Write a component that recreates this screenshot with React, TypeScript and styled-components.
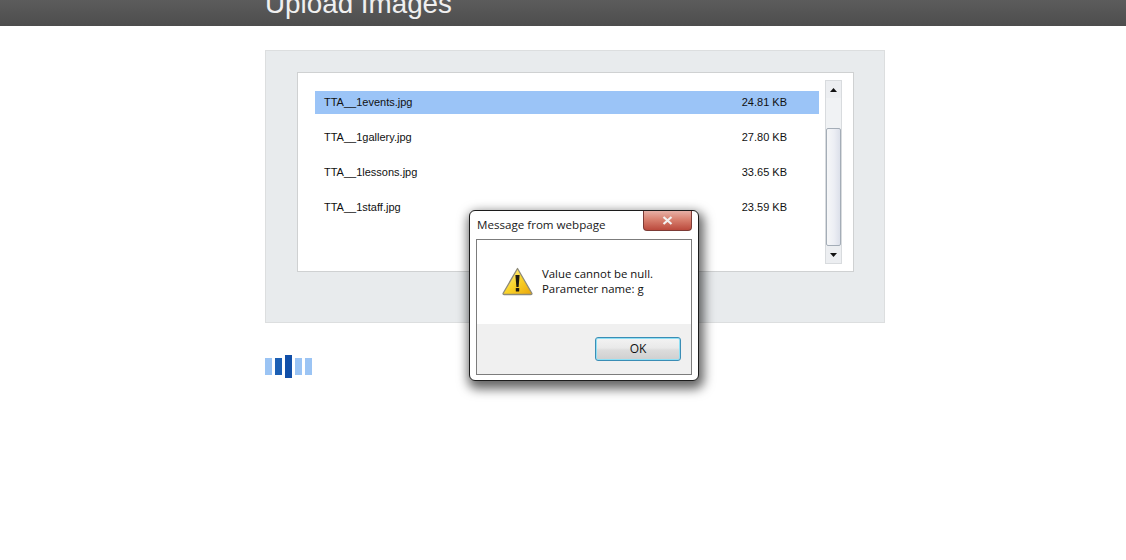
import React from 'react';
import styled, { createGlobalStyle } from 'styled-components';

const GlobalStyle = createGlobalStyle`
  html, body {
    margin: 0;
    padding: 0;
    background: #fff;
    font-family: "Liberation Sans", Arial, sans-serif;
  }
`;

const Page = styled.div`
  position: relative;
  width: 1126px;
  height: 560px;
  overflow: hidden;
`;

const Header = styled.header`
  height: 26px;
  padding-left: 265px;
  background: linear-gradient(#5c5c5c, #4d4d4d);
  overflow: hidden;
`;

const Title = styled.h1`
  margin: -11px 0 0;
  font-size: 27.8px;
  line-height: 30px;
  font-weight: 400;
  color: #f0f0f0;
  white-space: nowrap;
`;

const Content = styled.main`
  width: 620px;
  margin: 24px 0 0 265px;
`;

const Panel = styled.section`
  box-sizing: border-box;
  height: 273px;
  padding: 21px 30px 0 31px;
  background: #e8ebed;
  border: 1px solid #dcdedf;
`;

const ListBox = styled.div`
  box-sizing: border-box;
  height: 200px;
  padding: 7px 11px 0 17px;
  background: #fff;
  border: 1px solid #cfd1d2;
  display: flex;
  justify-content: space-between;
`;

const FileList = styled.ul`
  width: 504px;
  margin: 11px 0 0;
  padding: 0;
  list-style: none;
  display: flex;
  flex-direction: column;
  gap: 12px;
`;

const FileRow = styled.li<{ $selected?: boolean }>`
  height: 23px;
  padding: 0 32px 2px 9px;
  box-sizing: border-box;
  display: flex;
  align-items: center;
  justify-content: space-between;
  font-size: 11px;
  color: #111;
  background: ${p => (p.$selected ? '#9bc4f7' : 'transparent')};
`;

const Scrollbar = styled.div`
  box-sizing: border-box;
  width: 17px;
  height: 184px;
  display: flex;
  flex-direction: column;
  background: #f0f2f4;
  border: 1px solid #d8dbde;
`;

const ScrollArrow = styled.div`
  height: 17px;
  flex: none;
  display: flex;
  align-items: center;
  justify-content: center;
  background: #eceef1;
`;

const ScrollSpace = styled.div`
  height: 30px;
  flex: none;
`;

const ScrollThumb = styled.div`
  flex: 1;
  border: 1px solid #a4adb7;
  border-radius: 2px;
  background: linear-gradient(90deg, #f6f7f8, #eceef4 55%, #dce0ea);
`;

const Spinner = styled.div`
  height: 23px;
  margin-top: 32px;
  display: flex;
  align-items: center;
  gap: 3px;
`;

const SpinnerBar = styled.span<{ $tone: 'light' | 'mid' | 'dark' }>`
  width: 7px;
  height: ${p => (p.$tone === 'dark' ? 23 : 17)}px;
  background: ${p =>
    p.$tone === 'light' ? '#9bc4f4' : p.$tone === 'mid' ? '#1c5fb4' : '#114fa8'};
`;

const Dialog = styled.div`
  position: absolute;
  left: 469px;
  top: 210px;
  box-sizing: border-box;
  width: 230px;
  height: 171px;
  padding: 0 6px 5px;
  display: flex;
  flex-direction: column;
  background: #fff;
  border: 1px solid #1c1c1c;
  border-radius: 6px;
  box-shadow: 2px 5px 11px 3px rgba(0, 0, 0, 0.6);
`;

const DialogTitle = styled.div`
  height: 28px;
  flex: none;
  padding: 0 0 2px 1px;
  box-sizing: border-box;
  display: flex;
  align-items: center;
  font-family: "Open Sans", "Noto Sans", sans-serif;
  font-size: 11.6px;
  color: #1a1a1a;
`;

const CloseButton = styled.div`
  position: absolute;
  top: 0;
  right: 6px;
  width: 47px;
  height: 19px;
  display: flex;
  align-items: center;
  justify-content: center;
  background: linear-gradient(#e6b0a6, #d8806f 45%, #bb4a3d);
  border: 1px solid #7d3b36;
  border-top: none;
  border-radius: 0 0 4px 4px;
`;

const DialogBody = styled.div`
  flex: 1;
  display: flex;
  flex-direction: column;
  border: 1px solid #7c7c7c;
`;

const MessageArea = styled.div`
  height: 84px;
  flex: none;
  padding: 26px 0 0 25px;
  box-sizing: border-box;
  display: flex;
  gap: 9px;
  background: #fff;
`;

const MessageText = styled.div`
  font-family: "Open Sans", "Noto Sans", sans-serif;
  font-size: 11.4px;
  line-height: 15px;
  color: #111;
`;

const ButtonArea = styled.div`
  flex: 1;
  padding: 13px 10px 0 0;
  display: flex;
  justify-content: flex-end;
  align-items: flex-start;
  background: #f0f0f0;
`;

const OkButton = styled.button`
  box-sizing: border-box;
  width: 86px;
  height: 24px;
  padding: 0 0 2px;
  font-family: "Open Sans", "Noto Sans", sans-serif;
  font-size: 12px;
  color: #111;
  background: linear-gradient(#f3f3f3 0%, #e9e9e9 45%, #dcdcdc 55%, #cfcfcf 100%);
  border: 1px solid #3b8db5;
  border-radius: 3px;
  box-shadow: inset 0 0 0 1px #8fe0f5;
`;

const WarningIcon = () => (
  <svg width="31" height="29" viewBox="0 0 31 29" style={{ flex: 'none', marginTop: 1 }}>
    <defs>
      <linearGradient id="warn" x1="0" y1="0" x2="1" y2="1">
        <stop offset="0" stopColor="#fff6b8" />
        <stop offset="0.5" stopColor="#fbd52a" />
        <stop offset="1" stopColor="#e9a50a" />
      </linearGradient>
    </defs>
    <path
      d="M15.5 1.5 L30 26.5 Q30 27.5 29 27.5 H2 Q1 27.5 1 26.5 Z"
      fill="url(#warn)"
      stroke="#8e8a78"
      strokeWidth="1.3"
      strokeLinejoin="round"
    />
    <path d="M13.4 8 H17.6 L16.6 20 H14.4 Z" fill="#1e1a10" />
    <rect x="13.8" y="21" width="3.4" height="3.6" rx="0.6" fill="#1e1a10" />
  </svg>
);

const files = [
  { name: 'TTA__1events.jpg', size: '24.81 KB', selected: true },
  { name: 'TTA__1gallery.jpg', size: '27.80 KB' },
  { name: 'TTA__1lessons.jpg', size: '33.65 KB' },
  { name: 'TTA__1staff.jpg', size: '23.59 KB' },
];

const spinnerBars: ('light' | 'mid' | 'dark')[] = ['light', 'mid', 'dark', 'light', 'light'];

export default function App() {
  return (
    <Page>
      <GlobalStyle />
      <Header>
        <Title>Upload Images</Title>
      </Header>
      <Content>
        <Panel>
          <ListBox>
            <FileList>
              {files.map(f => (
                <FileRow key={f.name} $selected={f.selected}>
                  <span>{f.name}</span>
                  <span>{f.size}</span>
                </FileRow>
              ))}
            </FileList>
            <Scrollbar>
              <ScrollArrow>
                <svg width="7" height="4" viewBox="0 0 7 4"><path d="M3.5 0 L7 4 H0 Z" fill="#111" /></svg>
              </ScrollArrow>
              <ScrollSpace />
              <ScrollThumb />
              <ScrollArrow>
                <svg width="7" height="4" viewBox="0 0 7 4"><path d="M0 0 H7 L3.5 4 Z" fill="#111" /></svg>
              </ScrollArrow>
            </Scrollbar>
          </ListBox>
        </Panel>
        <Spinner>
          {spinnerBars.map((tone, i) => (
            <SpinnerBar key={i} $tone={tone} />
          ))}
        </Spinner>
      </Content>
      <Dialog>
        <DialogTitle>Message from webpage</DialogTitle>
        <CloseButton>
          <svg width="11" height="9" viewBox="0 0 11 9">
            <path d="M1.5 1 L9.5 8 M9.5 1 L1.5 8" stroke="#f2f2f2" strokeWidth="2.2" />
          </svg>
        </CloseButton>
        <DialogBody>
          <MessageArea>
            <WarningIcon />
            <MessageText>
              Value cannot be null.
              <br />
              Parameter name: g
            </MessageText>
          </MessageArea>
          <ButtonArea>
            <OkButton>OK</OkButton>
          </ButtonArea>
        </DialogBody>
      </Dialog>
    </Page>
  );
}
